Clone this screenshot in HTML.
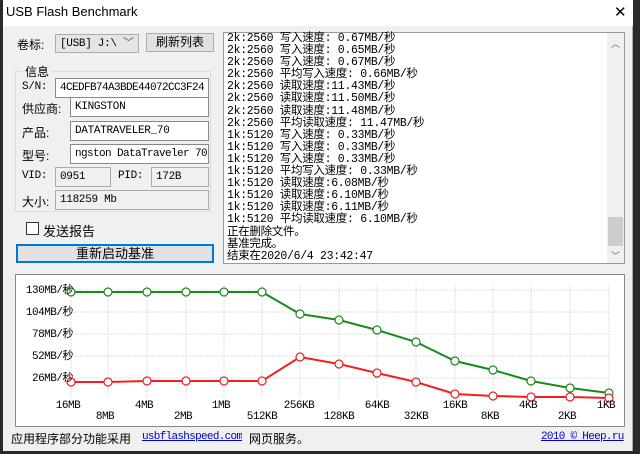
<!DOCTYPE html>
<html><head><meta charset="utf-8"><style>
*{margin:0;padding:0;box-sizing:border-box}
body{width:640px;height:454px;overflow:hidden;background:#2a2a2a;position:relative;font-family:"Liberation Sans","Noto Sans CJK SC",sans-serif;font-size:12px;color:#000}
.win{position:absolute;left:3px;top:0;width:630px;height:451px;background:#f0f0f0;border-right:1px solid #aaa}
.title{position:absolute;left:0;top:0;width:630px;height:26px;background:#fff;font-size:13px}
.abs{position:absolute;white-space:nowrap}
.mono{font-family:"Liberation Mono","Noto Sans CJK SC",monospace;font-size:11px;letter-spacing:-0.3px;white-space:nowrap;overflow:hidden}
.box{position:absolute;background:#fff;border:1px solid #888;padding:2px 0 0 4px;line-height:14px}
.ro{background:#f0f0f0;border:1px solid #aaa}
.btn{position:absolute;background:#e1e1e1;border:1px solid #adadad;text-align:center}
.log{position:absolute;left:220px;top:32px;width:402px;height:232px;background:#fff;border:1px solid #999}
.log div{font-family:"Liberation Mono","Noto Sans CJK SC",monospace;font-size:11.5px;line-height:12.1px;padding-left:3px;white-space:nowrap;letter-spacing:-0.3px}
</style></head><body>
<div class="win">
<div class="title"><span class="abs" style="left:3px;top:4px">USB Flash Benchmark</span><span class="abs" style="left:611px;top:3px;font-size:15px">✕</span></div>
<span class="abs" style="left:14px;top:36px">卷标:</span>
<div class="box mono" style="left:52px;top:34px;width:84px;height:19px;background:#e5e5e5;border-color:#adadad">[USB] J:\ <span style="color:#555">﹀</span></div>
<div class="btn" style="left:143px;top:33px;width:68px;height:19px;line-height:17px">刷新列表</div>
<div class="abs" style="left:12px;top:71px;width:196px;height:141px;border:1px solid #dcdcdc"></div>
<span class="abs" style="left:20px;top:63px;background:#f0f0f0;padding:0 2px">信息</span>
<span class="abs mono" style="left:19px;top:81px">S/N:</span>
<div class="box mono" style="left:52px;top:78px;width:154px;height:20px;letter-spacing:-0.6px">4CEDFB74A3BDE44072CC3F24</div>
<span class="abs" style="left:19px;top:100px">供应商:</span>
<div class="box mono" style="left:67px;top:97px;width:139px;height:20px">KINGSTON</div>
<span class="abs" style="left:19px;top:124px">产品:</span>
<div class="box mono" style="left:67px;top:121px;width:139px;height:20px">DATATRAVELER_70</div>
<span class="abs" style="left:19px;top:147px">型号:</span>
<div class="box mono" style="left:67px;top:144px;width:139px;height:20px;letter-spacing:-0.6px">ngston DataTraveler 70</div>
<span class="abs mono" style="left:19px;top:170px">VID:</span>
<div class="box mono ro" style="left:52px;top:167px;width:56px;height:20px">0951</div>
<span class="abs mono" style="left:115px;top:170px">PID:</span>
<div class="box mono ro" style="left:148px;top:167px;width:58px;height:20px">172B</div>
<span class="abs" style="left:19px;top:193px">大小:</span>
<div class="box mono ro" style="left:52px;top:190px;width:154px;height:20px">118259 Mb</div>
<div class="abs" style="left:23px;top:222px;width:13px;height:13px;border:1px solid #333;background:#fff"></div>
<span class="abs" style="left:40px;top:221px;font-size:13px">发送报告</span>
<div class="btn" style="left:13px;top:244px;width:198px;height:19px;line-height:16px;border:2px solid #0078d7;font-size:13px">重新启动基准</div>
<div class="log">
<div>2k:2560 写入速度: 0.67MB/秒</div><div>2k:2560 写入速度: 0.65MB/秒</div><div>2k:2560 写入速度: 0.67MB/秒</div><div>2k:2560 平均写入速度: 0.66MB/秒</div><div>2k:2560 读取速度:11.43MB/秒</div><div>2k:2560 读取速度:11.50MB/秒</div><div>2k:2560 读取速度:11.48MB/秒</div><div>2k:2560 平均读取速度: 11.47MB/秒</div><div>1k:5120 写入速度: 0.33MB/秒</div><div>1k:5120 写入速度: 0.33MB/秒</div><div>1k:5120 写入速度: 0.33MB/秒</div><div>1k:5120 平均写入速度: 0.33MB/秒</div><div>1k:5120 读取速度:6.08MB/秒</div><div>1k:5120 读取速度:6.10MB/秒</div><div>1k:5120 读取速度:6.11MB/秒</div><div>1k:5120 平均读取速度: 6.10MB/秒</div><div>正在删除文件。</div><div>基准完成。</div><div>结束在2020/6/4 23:42:47</div>
<div style="position:absolute;right:0;top:0;width:17px;height:230px;background:#f0f0f0;padding:0"></div>
<div style="position:absolute;right:1px;top:184px;width:15px;height:29px;background:#cdcdcd;padding:0"></div>
<span style="position:absolute;right:4px;top:4px;font-size:9px;color:#606060">︿</span>
<span style="position:absolute;right:4px;top:216px;font-size:9px;color:#606060">﹀</span>
</div>
<svg class="abs" style="left:0;top:0" width="630" height="451">
<rect x="12.5" y="274.5" width="609" height="152" fill="#fff" stroke="#888"/>
<g transform="translate(3,0)">
<g stroke="#ddd" stroke-dasharray="2,1">
<line x1="65" y1="290" x2="603" y2="290"/><line x1="65" y1="312" x2="603" y2="312"/><line x1="65" y1="334" x2="603" y2="334"/><line x1="65" y1="356" x2="603" y2="356"/><line x1="65" y1="378" x2="603" y2="378"/>
<line x1="65" y1="285" x2="65" y2="398"/><line x1="102" y1="285" x2="102" y2="398"/><line x1="141" y1="285" x2="141" y2="398"/><line x1="180" y1="285" x2="180" y2="398"/><line x1="218" y1="285" x2="218" y2="398"/><line x1="256" y1="285" x2="256" y2="398"/><line x1="294" y1="285" x2="294" y2="398"/><line x1="333" y1="285" x2="333" y2="398"/><line x1="371" y1="285" x2="371" y2="398"/><line x1="410" y1="285" x2="410" y2="398"/><line x1="449" y1="285" x2="449" y2="398"/><line x1="487" y1="285" x2="487" y2="398"/><line x1="525" y1="285" x2="525" y2="398"/><line x1="564" y1="285" x2="564" y2="398"/><line x1="603" y1="285" x2="603" y2="398"/>
</g>
<polyline fill="none" stroke="#1a8a1a" stroke-width="2" points="65,292 102,292 141,292 180,292 218,292 256,292 294,314 333,320 371,330 410,342 449,361 487,370 525,381 564,388 603,393"/>
<polyline fill="none" stroke="#f02020" stroke-width="2" points="65,382 102,382 141,381 180,381 218,381 256,381 294,357 333,364 371,373 410,382 449,394 487,396 525,397 564,397 603,398"/>
<g fill="#fff" stroke="#1a8a1a" stroke-width="1.2">
<circle cx="65" cy="292" r="4"/><circle cx="102" cy="292" r="4"/><circle cx="141" cy="292" r="4"/><circle cx="180" cy="292" r="4"/><circle cx="218" cy="292" r="4"/><circle cx="256" cy="292" r="4"/><circle cx="294" cy="314" r="4"/><circle cx="333" cy="320" r="4"/><circle cx="371" cy="330" r="4"/><circle cx="410" cy="342" r="4"/><circle cx="449" cy="361" r="4"/><circle cx="487" cy="370" r="4"/><circle cx="525" cy="381" r="4"/><circle cx="564" cy="388" r="4"/><circle cx="603" cy="393" r="4"/></g>
<g fill="#fff" stroke="#f02020" stroke-width="1.2">
<circle cx="65" cy="382" r="4"/><circle cx="102" cy="382" r="4"/><circle cx="141" cy="381" r="4"/><circle cx="180" cy="381" r="4"/><circle cx="218" cy="381" r="4"/><circle cx="256" cy="381" r="4"/><circle cx="294" cy="357" r="4"/><circle cx="333" cy="364" r="4"/><circle cx="371" cy="373" r="4"/><circle cx="410" cy="382" r="4"/><circle cx="449" cy="394" r="4"/><circle cx="487" cy="396" r="4"/><circle cx="525" cy="397" r="4"/><circle cx="564" cy="397" r="4"/><circle cx="603" cy="398" r="4"/></g>
<g font-family="Liberation Mono,monospace" font-size="11" letter-spacing="-0.5" text-anchor="middle">
<text x="62" y="408">16MB</text><text x="99" y="419">8MB</text><text x="138" y="408">4MB</text><text x="177" y="419">2MB</text><text x="215" y="408">1MB</text><text x="256" y="419">512KB</text><text x="293" y="408">256KB</text><text x="333" y="419">128KB</text><text x="371" y="408">64KB</text><text x="410" y="419">32KB</text><text x="449" y="408">16KB</text><text x="484" y="419">8KB</text><text x="522" y="408">4KB</text><text x="561" y="419">2KB</text><text x="600" y="408">1KB</text></g>
</g>
<g font-family="Liberation Mono,Noto Sans CJK SC,monospace" font-size="11" letter-spacing="-0.5" text-anchor="end">
<text x="70" y="293">130MB/秒</text><text x="70" y="315">104MB/秒</text><text x="70" y="337">78MB/秒</text><text x="70" y="359">52MB/秒</text><text x="70" y="381">26MB/秒</text></g>
</svg>
<span class="abs" style="left:8px;top:430px">应用程序部分功能采用</span>
<span class="abs mono" style="left:139px;top:431px;color:#00c;text-decoration:underline;letter-spacing:-0.7px">usbflashspeed.com</span>
<span class="abs" style="left:246px;top:430px">网页服务。</span>
<span class="abs mono" style="left:538px;top:431px;color:#00c;text-decoration:underline;letter-spacing:-0.7px">2010 © Heep.ru</span>
</div>
</body></html>
